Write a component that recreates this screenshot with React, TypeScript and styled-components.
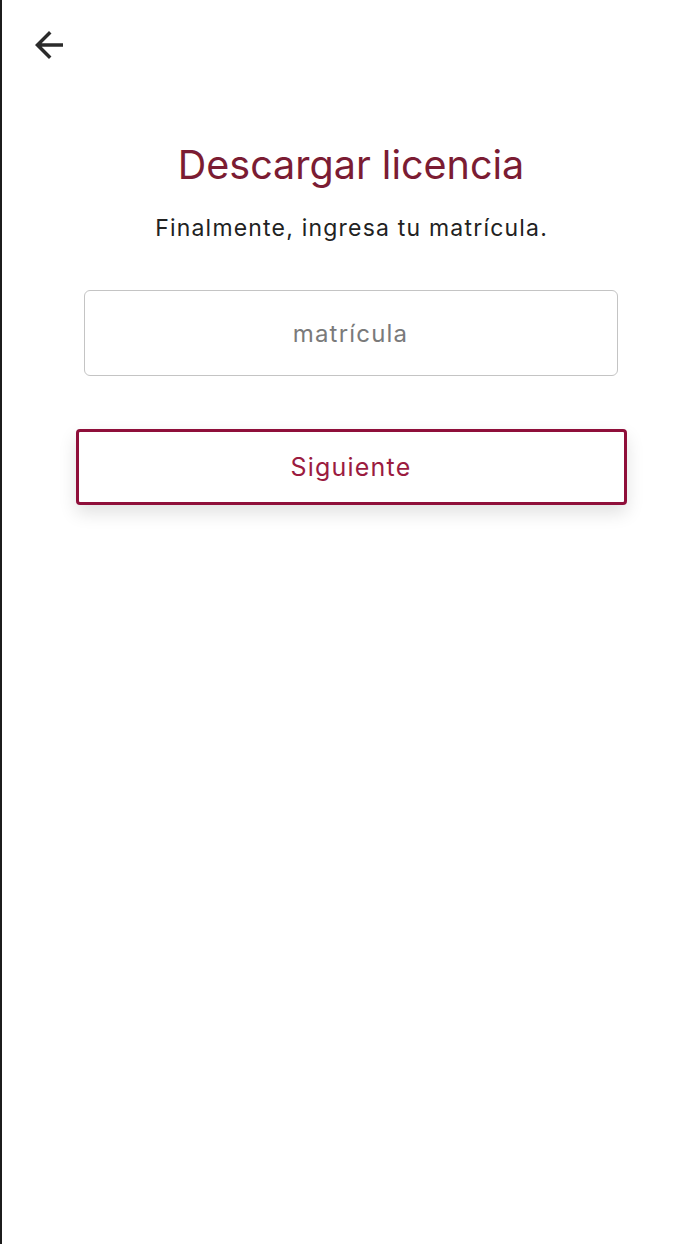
import React from "react";
import styled, { createGlobalStyle } from "styled-components";

const Global = createGlobalStyle`
  html, body { margin: 0; padding: 0; background: #ffffff; }
  body { font-family: Inter, "Open Sans", sans-serif; }
  * { box-sizing: border-box; }
`;

const Screen = styled.div`
  min-height: 1244px;
  background: #ffffff;
  border-left: 2px solid #1c1c1c;
  display: flex;
  flex-direction: column;
`;

const TopBar = styled.header`
  height: 90px;
  display: flex;
  align-items: flex-start;
  padding: 24px 0 0 26px;
`;

const BackButton = styled.button`
  width: 42px;
  height: 42px;
  padding: 0;
  border: none;
  background: transparent;
  display: flex;
  align-items: center;
  justify-content: center;
  color: #2b2b2b;
`;

const Content = styled.main`
  display: flex;
  flex-direction: column;
  align-items: center;
  padding: 51px 0 0;
`;

const Title = styled.h1`
  margin: 0;
  font-family: Inter, sans-serif;
  font-weight: 400;
  font-size: 39.5px;
  line-height: 48px;
  color: #7b1c33;
`;

const Subtitle = styled.p`
  margin: 24px 0 0;
  padding-left: 1.2px;
  font-family: Inter, sans-serif;
  font-size: 23px;
  letter-spacing: 1.2px;
  line-height: 30px;
  color: #222222;
`;

const Input = styled.input`
  margin-top: 47px;
  width: 534px;
  height: 86px;
  margin-left: -1px;
  border: 1.5px solid #c4c4c4;
  border-radius: 6px;
  text-align: center;
  font-family: Inter, sans-serif;
  font-size: 24px;
  letter-spacing: 1.2px;
  color: #333;
  outline: none;
  &::placeholder { color: #7a7a7a; }
`;

const NextButton = styled.button`
  margin-top: 53px;
  width: 551px;
  height: 76px;
  border: 3px solid #8f0f3a;
  border-radius: 4px;
  background: #ffffff;
  box-shadow: 0 8px 18px rgba(0, 0, 0, 0.12);
  font-family: Inter, sans-serif;
  font-size: 25px;
  letter-spacing: 1.2px;
  color: #9b1b3f;
  cursor: pointer;
`;

export default function App() {
  return (
    <>
      <Global />
      <Screen>
        <TopBar>
          <BackButton aria-label="Atrás">
            <svg width="42" height="42" viewBox="0 0 24 24" fill="currentColor">
              <path d="M20 11H7.83l5.59-5.59L12 4l-8 8 8 8 1.41-1.41L7.83 13H20v-2z" />
            </svg>
          </BackButton>
        </TopBar>
        <Content>
          <Title>Descargar licencia</Title>
          <Subtitle>Finalmente, ingresa tu matrícula.</Subtitle>
          <Input placeholder="matrícula" />
          <NextButton>Siguiente</NextButton>
        </Content>
      </Screen>
    </>
  );
}
